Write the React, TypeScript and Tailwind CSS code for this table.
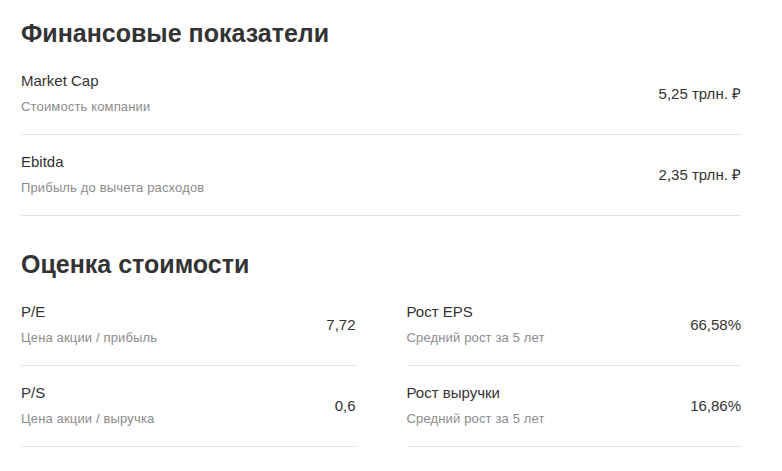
import React from 'react';

type Metric = { title: string; sub: string; value: string };

const finance: Metric[] = [
  { title: 'Market Cap', sub: 'Стоимость компании', value: '5,25 трлн. ₽' },
  { title: 'Ebitda', sub: 'Прибыль до вычета расходов', value: '2,35 трлн. ₽' },
];

const valuationLeft: Metric[] = [
  { title: 'P/E', sub: 'Цена акции / прибыль', value: '7,72' },
  { title: 'P/S', sub: 'Цена акции / выручка', value: '0,6' },
];

const valuationRight: Metric[] = [
  { title: 'Рост EPS', sub: 'Средний рост за 5 лет', value: '66,58%' },
  { title: 'Рост выручки', sub: 'Средний рост за 5 лет', value: '16,86%' },
];

const Row = ({ m }: { m: Metric }) => (
  <div className="flex items-center justify-between border-b border-[#e3e3e3] pt-[17px] pb-[19px]">
    <div className="flex flex-col gap-[8px]">
      <span className="text-[15px] leading-[20px] text-[#333333]">{m.title}</span>
      <span className="text-[13px] leading-[16px] tracking-[0.15px] text-[#8c8c8c]">{m.sub}</span>
    </div>
    <span className="text-[15px] leading-[20px] text-[#333333] pt-[2px]">{m.value}</span>
  </div>
);

const App = () => {
  return (
    <div
      className="w-[782px] h-[471px] bg-white overflow-hidden pl-[21px] pr-[41px] pt-[16px]"
      style={{ fontFamily: '"Liberation Sans", Arial, sans-serif' }}
    >
      <h2 className="text-[25px] leading-[34px] font-bold text-[#333333]">Финансовые показатели</h2>
      <div className="mt-[4px]">
        {finance.map((m) => (
          <Row key={m.title} m={m} />
        ))}
      </div>

      <h2 className="mt-[31px] text-[25px] leading-[34px] font-bold text-[#333333]">Оценка стоимости</h2>
      <div className="mt-[4px] grid grid-cols-2 gap-x-[51px]">
        <div>
          {valuationLeft.map((m) => (
            <Row key={m.title} m={m} />
          ))}
        </div>
        <div>
          {valuationRight.map((m) => (
            <Row key={m.title} m={m} />
          ))}
        </div>
      </div>
    </div>
  );
};

export default App;
